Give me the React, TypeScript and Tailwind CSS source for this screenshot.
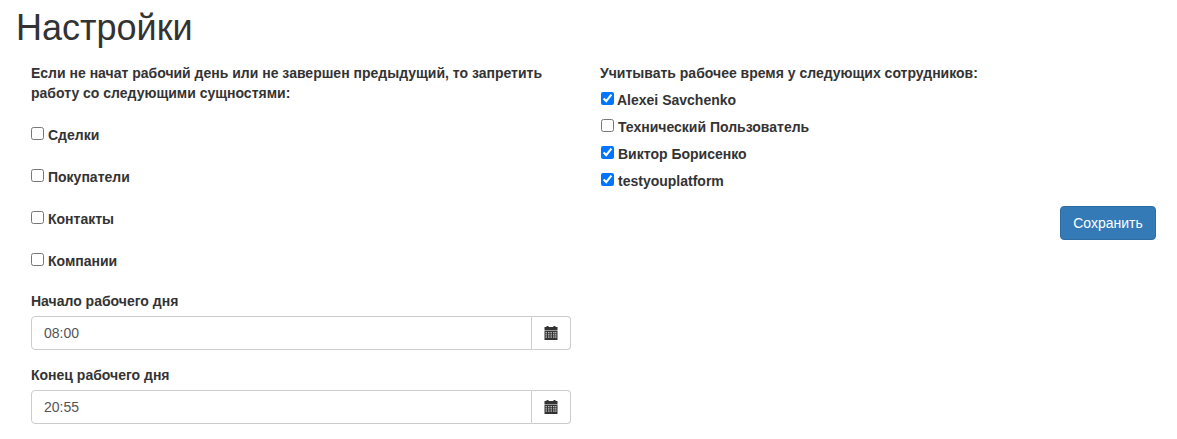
const font = { fontFamily: '"Liberation Sans", Arial, sans-serif' };

function CalendarIcon() {
  return (
    <svg width="14" height="14" viewBox="0 0 14 14" aria-hidden="true">
      <rect x="2.5" y="0" width="2" height="2" fill="#333" />
      <rect x="9.5" y="0" width="2" height="2" fill="#333" />
      <rect x="0.5" y="1" width="13" height="3.5" fill="#333" />
      <rect x="0.5" y="5" width="13" height="9" fill="#333" />
      {[1.5, 4, 6.5, 9, 11].map((x) =>
        [6, 8.2, 10.4].map((y) => <rect key={`${x}-${y}`} x={x} y={y} width="1.5" height="1.3" fill="#b9b9b9" />),
      )}
    </svg>
  );
}

function Check({ label, checked = false, className = "" }: { label: string; checked?: boolean; className?: string }) {
  return (
    <label className={`flex items-center h-5 font-bold text-[14px] text-[#333] ${className}`}>
      <input type="checkbox" defaultChecked={checked} className="w-[13px] h-[13px] m-0 mr-[4px] -mt-[3px]" style={{ appearance: "auto" }} />
      <span>{label}</span>
    </label>
  );
}

function TimeField({ label, value, className = "" }: { label: string; value: string; className?: string }) {
  return (
    <div className={className}>
      <div className="h-5 font-bold text-[14px] text-[#333] mb-[5px]">{label}</div>
      <div className="flex h-[34px] w-[540px]">
        <input
          defaultValue={value}
          className="flex-1 min-w-0 px-3 border border-[#ccc] rounded-l-[4px] text-[14px] text-[#555] bg-white outline-none"
        />
        <span className="w-[39px] flex items-center justify-center pr-[1px] border border-l-0 border-[#ccc] rounded-r-[4px] bg-white">
          <CalendarIcon />
        </span>
      </div>
    </div>
  );
}

export default function App() {
  return (
    <div className="w-[1177px] h-[439px] overflow-hidden bg-white pl-4 text-[#333]" style={font}>
      <h1 className="text-[36px] leading-[40px] font-normal text-[#333] mt-[8px] mb-[15px]">Настройки</h1>
      <div className="flex pl-[15px] pr-[21px]">
        <div className="w-[540px] shrink-0">
          <p className="text-[14px] leading-5 font-bold">
            Если не начат рабочий день или не завершен предыдущий, то запретить работу со следующими сущностями:
          </p>
          <div className="mt-[22px] flex flex-col gap-[22px]">
            <Check label="Сделки" />
            <Check label="Покупатели" />
            <Check label="Контакты" />
            <Check label="Компании" />
          </div>
          <TimeField label="Начало рабочего дня" value="08:00" className="mt-[20px]" />
          <TimeField label="Конец рабочего дня" value="20:55" className="mt-[15px]" />
        </div>
        <div className="ml-[29px] flex-1">
          <div className="h-5 text-[14px] leading-5 font-bold">Учитывать рабочее время у следующих сотрудников:</div>
          <div className="mt-[7px] flex flex-col gap-[7px] pl-[1px]">
            <Check label="Alexei Savchenko" checked className="[&>input]:mr-[3px]" />
            <Check label="Технический Пользователь" />
            <Check label="Виктор Борисенко" checked />
            <Check label="testyouplatform" checked />
          </div>
          <div className="flex justify-end mt-[15px]">
            <button className="w-[96px] h-[34px] rounded-[4px] bg-[#337ab7] border border-[#2e6da4] text-white text-[14px]">
              Сохранить
            </button>
          </div>
        </div>
      </div>
    </div>
  );
}
